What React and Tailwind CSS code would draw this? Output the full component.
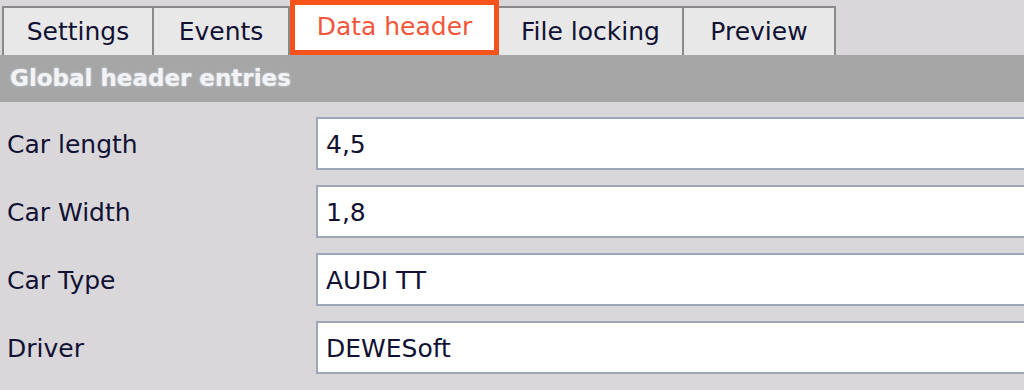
import React from 'react';

const tabs = [
  { label: 'Settings', w: 'w-[152px]' },
  { label: 'Events', w: 'w-[136px]' },
  { label: 'Data header', w: 'w-[209px]', active: true },
  { label: 'File locking', w: 'w-[185px]' },
  { label: 'Preview', w: 'w-[152px]' },
];

const entries = [
  { name: 'Car length', value: '4,5' },
  { name: 'Car Width', value: '1,8' },
  { name: 'Car Type', value: 'AUDI TT' },
  { name: 'Driver', value: 'DEWESoft' },
];

const App = () => {
  return (
    <div className="w-[1024px] h-[390px] overflow-hidden bg-[#d9d7da] font-['DejaVu_Sans',sans-serif] text-[25px] text-[#111133]">
      {/* tab strip */}
      <div className="flex items-end h-[55px] pl-[2px]">
        {tabs.map((t, i) =>
          t.active ? (
            <div
              key={t.label}
              className={`${t.w} shrink-0 h-[55px] flex items-center justify-center border-[5px] border-[#f4531c] bg-white text-[#f2563a]`}
            >
              <span className="pb-[2px]">{t.label}</span>
            </div>
          ) : (
            <div
              key={t.label}
              className={`${t.w} shrink-0 h-[49px] flex items-center justify-center bg-[#e8e8e8] border-t-2 border-r-2 border-[#8a8a8a] ${i === 0 ? 'border-l-2' : ''}`}
            >
              <span>{t.label}</span>
            </div>
          )
        )}
      </div>

      {/* section header */}
      <div className="h-[47px] bg-[#a6a6a6] flex items-center pl-[10px]">
        <span className="text-[23px] font-bold text-[#f3f3f5] [text-shadow:0_0_2px_#d6e2f2]">
          Global header entries
        </span>
      </div>

      {/* entries */}
      <div className="flex flex-col gap-[15px] pt-[15px]">
        {entries.map(e => (
          <div key={e.name} className="flex items-center h-[53px]">
            <div className="w-[316px] shrink-0 pl-[7px] pt-[3px]">{e.name}</div>
            <div className="w-[760px] shrink-0 h-[53px] flex items-center bg-white border-2 border-[#9ea7b7] pl-[8px] pt-[3px]">
              {e.value}
            </div>
          </div>
        ))}
      </div>
    </div>
  );
};

export default App;
